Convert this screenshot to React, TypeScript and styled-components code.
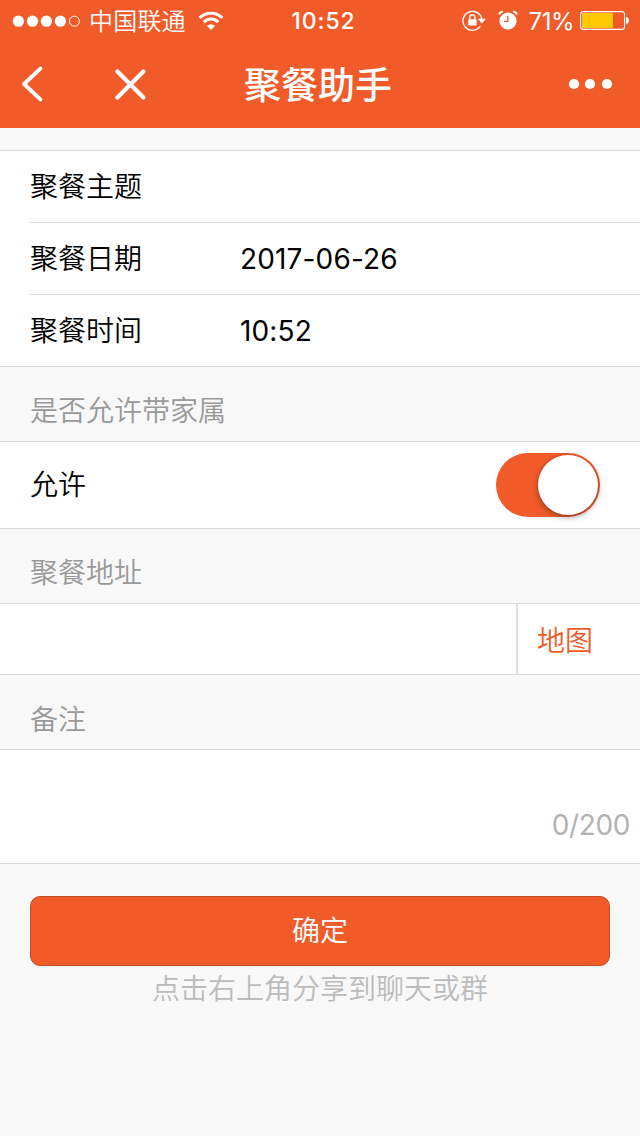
import React from "react";
import styled, { createGlobalStyle } from "styled-components";

const ORANGE = "#f15b2a";
const LINE = "#d9d9d9";

const GlobalStyle = createGlobalStyle`
  * { box-sizing: border-box; }
  body {
    margin: 0;
    background: #f8f8f8;
    color: #000;
    font-family: Inter, "Noto Sans CJK SC", sans-serif;
    font-size: 28px;
  }
`;

const Page = styled.div`
  width: 640px;
  min-height: 1136px;
  background: #f8f8f8;
`;

const Header = styled.header`
  height: 128px;
  background: ${ORANGE};
  color: #fff;
  margin-bottom: 22px;
`;

const StatusBar = styled.div`
  height: 40px;
  display: grid;
  grid-template-columns: 1fr auto 1fr;
  align-items: center;
  padding: 0 11px 0 12px;
  font-size: 24px;
  line-height: 40px;
`;

const StatusGroup = styled.div<{ $end?: boolean }>`
  display: flex;
  align-items: center;
  justify-content: ${(p) => (p.$end ? "flex-end" : "flex-start")};
  height: 40px;
`;

const Carrier = styled.span`
  margin: 0 12px 0 8px;
  padding-top: 2px;
  font-weight: 350;
  letter-spacing: 0.2px;
`;

const Clock = styled.span`
  font-size: 23px;
  font-weight: 540;
  letter-spacing: 0.9px;
  padding: 1px 0 0 6px;
`;

const Percent = styled.span`
  font-size: 24px;
  font-weight: 370;
  letter-spacing: -0.5px;
  margin: 0 6px 0 11px;
  padding-top: 2px;
`;

const NavBar = styled.nav`
  height: 88px;
  display: grid;
  grid-template-columns: 160px 1fr 160px;
  align-items: center;
`;

const NavActions = styled.div<{ $end?: boolean }>`
  display: flex;
  gap: 68px;
  align-items: center;
  justify-content: ${(p) => (p.$end ? "flex-end" : "flex-start")};
  padding: ${(p) => (p.$end ? "0 27px 0 0" : "0 0 0 20px")};
`;

const IconButton = styled.button`
  display: flex;
  padding: 0;
  border: 0;
  background: none;
  color: inherit;
`;

const Title = styled.h1`
  margin: 0;
  padding: 3px 4px 0 0;
  font-size: 37px;
  font-weight: 500;
  line-height: 85px;
  text-align: center;
  white-space: nowrap;
`;

const Group = styled.section`
  background: #fff;
  border-top: 1px solid ${LINE};
  border-bottom: 1px solid ${LINE};
`;

const Row = styled.div<{ $height?: number }>`
  height: ${(p) => p.$height ?? 71}px;
  display: flex;
  align-items: center;
  padding-left: 30px;
`;

const Divider = styled.div`
  height: 1px;
  margin-left: 30px;
  background: ${LINE};
`;

const Label = styled.label`
  width: 210px;
  line-height: 40px;
  font-weight: 350;
`;

const Value = styled.span`
  line-height: 40px;
  letter-spacing: 0.15px;
`;

const Caption = styled.h2<{ $top?: number }>`
  height: 74px;
  margin: 0;
  padding: ${(p) => p.$top ?? 24}px 30px 0;
  font-size: 28px;
  font-weight: 350;
  line-height: 40px;
  color: #999;
`;

const Switch = styled.button`
  width: 104px;
  height: 64px;
  margin: 0 40px 0 auto;
  padding: 2px;
  border: 0;
  border-radius: 32px;
  background: ${ORANGE};
  display: flex;
  justify-content: flex-end;
`;

const Knob = styled.span`
  width: 60px;
  height: 60px;
  border-radius: 50%;
  background: #fff;
  box-shadow: 0 2px 6px rgba(0, 0, 0, 0.4);
`;

const MapButton = styled.button`
  width: 124px;
  height: 70px;
  margin-left: auto;
  padding: 0 0 1px 19px;
  border: 0;
  border-left: 2px solid #e0e0e0;
  background: none;
  color: ${ORANGE};
  font: inherit;
  font-weight: 350;
  text-align: left;
`;

const Remark = styled.div`
  height: 113px;
  display: flex;
  align-items: flex-end;
  justify-content: flex-end;
  padding: 0 10px 18px;
  line-height: 40px;
  letter-spacing: -0.4px;
  color: #b2b2b2;
`;

const Submit = styled.button`
  display: block;
  width: 580px;
  height: 70px;
  margin: 32px auto 0;
  padding: 0;
  border: 1px solid #c14a24;
  border-radius: 10px;
  background: ${ORANGE};
  color: #fff;
  font: inherit;
  font-weight: 350;
  line-height: 66px;
`;

const Tip = styled.p`
  margin: 3px 0 0;
  line-height: 40px;
  font-weight: 350;
  text-align: center;
  color: #bbb;
`;

const StatusIcons = styled.span`
  display: flex;
  gap: 12px;
`;

const SignalDots = () => (
  <svg width="69" height="12" viewBox="0 0 69 12" fill="#fff">
    {[6.4, 20.5, 34.4, 48.4].map((x) => (
      <circle key={x} cx={x} cy="6.2" r="5.6" />
    ))}
    <circle cx="62.4" cy="6.2" r="5" fill="none" stroke="#fff" />
  </svg>
);

const Wifi = () => (
  <svg width="26" height="20" viewBox="0 0 26 20" fill="none" stroke="#fff" strokeWidth="3">
    <path d="M1.6 6.9a16 16 0 0 1 22.8 0" />
    <path d="M5.8 11.1a10.2 10.2 0 0 1 14.4 0" />
    <path d="M13 19l-4.1-4.2a5.9 5.9 0 0 1 8.2 0z" fill="#fff" stroke="none" />
  </svg>
);

const RotationLock = () => (
  <svg width="24" height="22" viewBox="0 0 24 22" fill="none" stroke="#fff">
    <path d="M19.8 9.2A9.5 9.5 0 1 0 18.3 16.2" strokeWidth="1.4" />
    <path d="M15.9 8.8h8l-4 4.6z" fill="#fff" stroke="none" />
    <rect x="6.2" y="9.2" width="8.4" height="6.4" rx="0.8" fill="#fff" stroke="none" />
    <path d="M7.9 9.5V7.3a2.5 2.5 0 0 1 5 0v2.2" strokeWidth="1.4" />
  </svg>
);

const Alarm = () => (
  <svg width="20" height="20" viewBox="0 0 20 20" fill="none">
    <circle cx="10" cy="11" r="8.6" fill="#fff" />
    <path d="M1 4.6Q1.7 1.9 4.9 1.3M19 4.6Q18.3 1.9 15.1 1.3" stroke="#fff" strokeWidth="1.8" />
    <path d="M9.8 5.8v5.5H6" stroke={ORANGE} strokeWidth="1.3" />
  </svg>
);

const Battery = () => (
  <svg width="49" height="19" viewBox="0 0 49 19">
    <rect x="0.6" y="0.6" width="44" height="17.8" rx="3" fill="none" stroke="#fff" strokeWidth="1.1" />
    <rect x="2" y="2" width="31" height="15" rx="1" fill="#ffc800" />
    <path d="M46 6q3 .6 3 3.5t-3 3.5z" fill="#fff" />
  </svg>
);

export default function App() {
  return (
    <Page>
      <GlobalStyle />
      <Header>
        <StatusBar>
          <StatusGroup>
            <SignalDots />
            <Carrier>中国联通</Carrier>
            <Wifi />
          </StatusGroup>
          <Clock>10:52</Clock>
          <StatusGroup $end>
            <StatusIcons>
              <RotationLock />
              <Alarm />
            </StatusIcons>
            <Percent>71%</Percent>
            <Battery />
          </StatusGroup>
        </StatusBar>
        <NavBar>
          <NavActions>
            <IconButton aria-label="返回">
              <svg width="24" height="38" viewBox="0 0 24 38" fill="none" stroke="#fff" strokeWidth="3.8" strokeLinecap="round" strokeLinejoin="round">
                <path d="M20.4 3.6L4 19l16.4 15.4" />
              </svg>
            </IconButton>
            <IconButton aria-label="关闭">
              <svg width="38" height="38" viewBox="0 0 38 38" fill="none" stroke="#fff" strokeWidth="4.2" strokeLinecap="round">
                <path d="M5.4 6.4l26 26M31.4 6.4l-26 26" />
              </svg>
            </IconButton>
          </NavActions>
          <Title>聚餐助手</Title>
          <NavActions $end>
            <IconButton aria-label="更多">
              <svg width="45" height="12" viewBox="0 0 45 12" fill="#fff">
                <circle cx="6" cy="6" r="5.1" />
                <circle cx="22" cy="6" r="5.1" />
                <circle cx="39" cy="6" r="5.1" />
              </svg>
            </IconButton>
          </NavActions>
        </NavBar>
      </Header>

      <Group>
        <Row>
          <Label>聚餐主题</Label>
        </Row>
        <Divider />
        <Row>
          <Label>聚餐日期</Label>
          <Value>2017-06-26</Value>
        </Row>
        <Divider />
        <Row>
          <Label>聚餐时间</Label>
          <Value>10:52</Value>
        </Row>
      </Group>

      <Caption>是否允许带家属</Caption>
      <Group>
        <Row $height={86}>
          <Label>允许</Label>
          <Switch role="switch" aria-checked="true">
            <Knob />
          </Switch>
        </Row>
      </Group>

      <Caption>聚餐地址</Caption>
      <Group>
        <Row $height={70}>
          <MapButton>地图</MapButton>
        </Row>
      </Group>

      <Caption $top={25}>备注</Caption>
      <Group>
        <Remark>0/200</Remark>
      </Group>

      <Submit>确定</Submit>
      <Tip>点击右上角分享到聊天或群</Tip>
    </Page>
  );
}
